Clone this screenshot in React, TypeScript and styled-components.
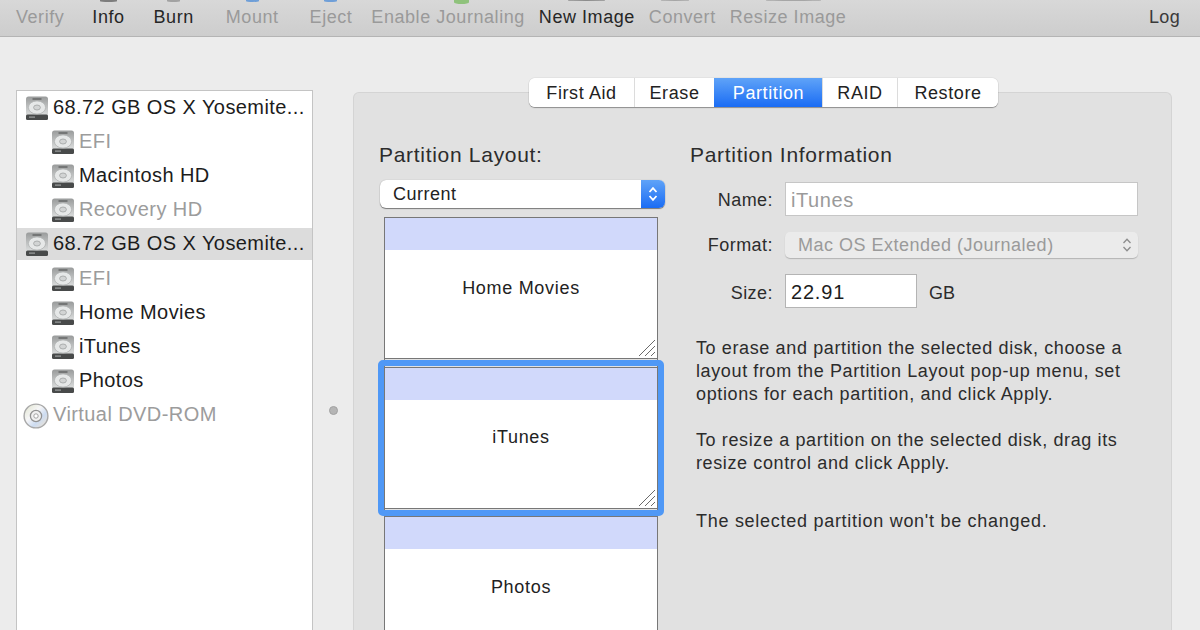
import React, { FC } from "react";
import styled, { createGlobalStyle } from "styled-components";

const GlobalStyle = createGlobalStyle`
  html, body {
    margin: 0;
    padding: 0;
    background: #ececec;
  }
  body {
    font-family: "Liberation Sans", Arial, sans-serif;
    -webkit-font-smoothing: antialiased;
  }
`;

type ToolItem = {
  label: string;
  gap: number;
  off?: boolean;
  stub?: { w: number; h: number; color: string; shift?: number };
};

const toolItems: ToolItem[] = [
  { label: "Verify", gap: 16, off: true },
  { label: "Info", gap: 28, stub: { w: 17, h: 1.5, color: "#7d7d7d" } },
  { label: "Burn", gap: 29, stub: { w: 13, h: 1.5, color: "#a2a2a2" } },
  { label: "Mount", gap: 32, off: true, stub: { w: 13, h: 2, color: "#6f9fd8" } },
  { label: "Eject", gap: 31, off: true, stub: { w: 13, h: 2, color: "#6f9fd8" } },
  { label: "Enable Journaling", gap: 19, off: true, stub: { w: 15, h: 3.5, color: "#8fc27c", shift: 13 } },
  { label: "New Image", gap: 14, stub: { w: 37, h: 1, color: "#8c8c8c" } },
  { label: "Convert", gap: 14, off: true, stub: { w: 28, h: 1, color: "#a6a6a6", shift: -7 } },
  { label: "Resize Image", gap: 14, off: true, stub: { w: 55, h: 1, color: "#a6a6a6", shift: 5 } },
];

const tabs = [
  { label: "First Aid", width: 105 },
  { label: "Erase", width: 80 },
  { label: "Partition", width: 108, active: true },
  { label: "RAID", width: 75 },
  { label: "Restore", width: 101 },
];

const disks = [
  { label: "68.72 GB OS X Yosemite...", kind: "disk" },
  { label: "EFI", kind: "volume", off: true },
  { label: "Macintosh HD", kind: "volume" },
  { label: "Recovery HD", kind: "volume", off: true },
  { label: "68.72 GB OS X Yosemite...", kind: "disk", selected: true },
  { label: "EFI", kind: "volume", off: true },
  { label: "Home Movies", kind: "volume" },
  { label: "iTunes", kind: "volume" },
  { label: "Photos", kind: "volume" },
  { label: "Virtual DVD-ROM", kind: "dvd", off: true },
];

const DriveIcon: FC<{ id: string }> = ({ id }) => (
  <IconSvg width="24" height="25" viewBox="0 0 24 25">
    <defs>
      <linearGradient id={id} x1="0" y1="0" x2="0" y2="1">
        <stop offset="0" stopColor="#999b9b" />
        <stop offset="0.75" stopColor="#d8dada" />
      </linearGradient>
    </defs>
    <rect x="1" y="0.5" width="22" height="23.5" rx="2.5" fill={`url(#${id})`} />
    <rect x="1" y="18.5" width="22" height="5.5" rx="1.5" fill="#484a4a" />
    <rect x="4" y="20.5" width="6" height="1.2" fill="#9c9e9e" />
    <ellipse cx="12" cy="11.5" rx="8.6" ry="6.6" fill="#e6e8e8" stroke="#b0b2b2" strokeWidth="0.8" />
    <ellipse cx="12" cy="11.5" rx="3.4" ry="2.5" fill="#d2d4d4" stroke="#a0a2a2" strokeWidth="0.8" />
    <rect x="7.5" y="2.2" width="9" height="1.6" fill="#6a6c6c" />
  </IconSvg>
);

const DvdIcon: FC = () => (
  <IconSvg width="26" height="26" viewBox="0 0 26 26">
    <defs>
      <linearGradient id="dvdShine" x1="0" y1="0" x2="1" y2="1">
        <stop offset="0" stopColor="#dfe3cc" />
        <stop offset="0.4" stopColor="#f6f6f7" />
        <stop offset="0.65" stopColor="#cddcf1" />
        <stop offset="1" stopColor="#f3e4cd" />
      </linearGradient>
    </defs>
    <circle cx="13" cy="13" r="11.9" fill="url(#dvdShine)" stroke="#a8a8a8" strokeWidth="1.4" />
    <circle cx="13" cy="13" r="5.6" fill="#f0f0f0" stroke="#929292" strokeWidth="1.3" />
    <circle cx="13" cy="13" r="2.2" fill="#ffffff" stroke="#9a9a9a" strokeWidth="0.9" />
  </IconSvg>
);

const Updown: FC<{ color: string; weight: number }> = ({ color, weight }) => (
  <svg width="12" height="18" viewBox="0 0 12 18" fill="none" stroke={color} strokeWidth={weight}>
    <path d="M2.5 7 L6 3.2 L9.5 7" />
    <path d="M2.5 11 L6 14.8 L9.5 11" />
  </svg>
);

const ResizeGrip: FC = () => (
  <GripSvg width="18" height="18" viewBox="0 0 18 18" stroke="#6a6a6a" strokeWidth="1">
    <path d="M1 17 L17 1" />
    <path d="M7 17 L17 7" />
    <path d="M13 17 L17 13" />
  </GripSvg>
);

const Partition: FC<{ name: string; selected?: boolean }> = ({ name, selected }) => (
  <PartitionBox>
    <PartitionHeader />
    <PartitionBody>
      <PartitionName>{name}</PartitionName>
      <ResizeGrip />
    </PartitionBody>
    {selected && <SelectionRing />}
  </PartitionBox>
);

export default function App() {
  return (
    <Page>
      <GlobalStyle />
      <Toolbar>
        {toolItems.map((t) => (
          <ToolLabel key={t.label} $gap={t.gap} $off={t.off}>
            {t.stub && (
              <ToolStub $w={t.stub.w} $h={t.stub.h} $color={t.stub.color} $shift={t.stub.shift || 0} />
            )}
            {t.label}
          </ToolLabel>
        ))}
        <LogLabel>Log</LogLabel>
      </Toolbar>
      <Content>
        <Sidebar>
          {disks.map((d, i) => (
            <DiskRow key={i} $selected={d.selected} $kind={d.kind}>
              {d.kind === "dvd" ? <DvdIcon /> : <DriveIcon id={`drive${i}`} />}
              <DiskName $off={d.off}>{d.label}</DiskName>
            </DiskRow>
          ))}
        </Sidebar>
        <Splitter>
          <SplitterDot />
        </Splitter>
        <Panel>
          <TabBar>
            {tabs.map((t) => (
              <Tab key={t.label} $active={t.active} $width={t.width}>
                {t.label}
              </Tab>
            ))}
          </TabBar>
          <Columns>
            <LayoutColumn>
              <SectionTitle>Partition Layout:</SectionTitle>
              <LayoutSelect>
                <span>Current</span>
                <SelectArrows>
                  <Updown color="#fff" weight={1.8} />
                </SelectArrows>
              </LayoutSelect>
              <PartitionMap>
                <Partition name="Home Movies" />
                <Partition name="iTunes" selected />
                <Partition name="Photos" />
              </PartitionMap>
            </LayoutColumn>
            <InfoColumn>
              <SectionTitle>Partition Information</SectionTitle>
              <FormRow $top={14}>
                <FieldLabel $drop={2}>Name:</FieldLabel>
                <NameField>iTunes</NameField>
              </FormRow>
              <FormRow $top={16}>
                <FieldLabel $drop={0}>Format:</FieldLabel>
                <FormatField>
                  <span>Mac OS Extended (Journaled)</span>
                  <Updown color="#8d8d8d" weight={1.3} />
                </FormatField>
              </FormRow>
              <FormRow $top={16}>
                <FieldLabel $drop={4}>Size:</FieldLabel>
                <SizeField>22.91</SizeField>
                <Unit>GB</Unit>
              </FormRow>
              <HelpText>
                <p>
                  To erase and partition the selected disk, choose a
                  <br />
                  layout from the Partition Layout pop-up menu, set
                  <br />
                  options for each partition, and click Apply.
                </p>
                <p>
                  To resize a partition on the selected disk, drag its
                  <br />
                  resize control and click Apply.
                </p>
                <LastNote>The selected partition won't be changed.</LastNote>
              </HelpText>
            </InfoColumn>
          </Columns>
        </Panel>
      </Content>
    </Page>
  );
}

const Page = styled.div`
  width: 1200px;
  height: 630px;
  overflow: hidden;
  display: flex;
  flex-direction: column;
  background: #ececec;
`;

const Toolbar = styled.div`
  height: 36px;
  flex: none;
  display: flex;
  background: linear-gradient(#d8d8d8, #cdcdcd);
  border-bottom: 1px solid #b4b4b4;
`;

const ToolLabel = styled.div<{ $gap: number; $off?: boolean }>`
  position: relative;
  display: flex;
  align-items: center;
  padding-bottom: 2px;
  margin-left: ${(p) => p.$gap}px;
  font-size: 18px;
  letter-spacing: 0.55px;
  color: ${(p) => (p.$off ? "#9a9a9a" : "#262626")};
  white-space: nowrap;
`;

const ToolStub = styled.div<{ $w: number; $h: number; $color: string; $shift: number }>`
  position: absolute;
  top: 0;
  left: 50%;
  width: ${(p) => p.$w}px;
  height: ${(p) => p.$h}px;
  margin-left: ${(p) => p.$shift - p.$w / 2}px;
  background: ${(p) => p.$color};
  border-radius: 0 0 50% 50%;
`;

const LogLabel = styled.div`
  display: flex;
  align-items: center;
  padding-bottom: 2px;
  margin-left: auto;
  margin-right: 20px;
  font-size: 18px;
  letter-spacing: 0.3px;
  color: #3a3a3a;
`;

const Content = styled.div`
  flex: 1;
  display: flex;
  padding: 53px 28px 0 16px;
  min-height: 0;
`;

const Sidebar = styled.div`
  width: 295px;
  flex: none;
  background: #fff;
  border: 1px solid #c4c4c4;
  border-bottom: none;
`;

const DiskRow = styled.div<{ $selected?: boolean; $kind: string }>`
  height: 34.2px;
  box-sizing: border-box;
  padding-bottom: 2px;
  display: flex;
  align-items: center;
  gap: 4px;
  padding-left: ${(p) => (p.$kind === "volume" ? "34px" : p.$kind === "dvd" ? "6px" : "8px")};
  background: ${(p) =>
    p.$selected ? "linear-gradient(#dcdcdc, #dcdcdc) 0 0 / 100% 32px no-repeat" : "none"};
`;

const IconSvg = styled.svg`
  flex: none;
  margin-top: 2px;
  filter: blur(0.35px);
`;

const DiskName = styled.span<{ $off?: boolean }>`
  font-size: 20px;
  letter-spacing: 0.42px;
  color: ${(p) => (p.$off ? "#9c9c9c" : "#1c1c1c")};
  white-space: nowrap;
`;

const Splitter = styled.div`
  width: 40px;
  flex: none;
  display: flex;
  justify-content: center;
  padding-top: 316px;
  box-sizing: border-box;
`;

const SplitterDot = styled.div`
  width: 9px;
  height: 9px;
  border-radius: 50%;
  background: #b5b5b5;
  border: 1px solid #a2a2a2;
  box-sizing: border-box;
`;

const Panel = styled.div`
  flex: 1;
  margin-top: 2px;
  background: #e1e1e1;
  border: 1px solid #d4d4d4;
  border-bottom: none;
  border-radius: 6px 6px 0 0;
  padding-left: 25px;
  position: relative;
  box-sizing: border-box;
`;

const TabBar = styled.div`
  position: absolute;
  top: -15px;
  left: 175px;
  display: flex;
  height: 29px;
  background: #fff;
  border-radius: 6px;
  box-shadow: 0 1px 1px rgba(0, 0, 0, 0.35), 0 0 1px rgba(0, 0, 0, 0.35);
  overflow: hidden;
`;

const Tab = styled.div<{ $active?: boolean; $width: number }>`
  width: ${(p) => p.$width}px;
  box-sizing: border-box;
  display: flex;
  align-items: center;
  justify-content: center;
  padding-top: 2px;
  font-size: 18px;
  letter-spacing: 0.6px;
  color: ${(p) => (p.$active ? "#fff" : "#222")};
  background: ${(p) => (p.$active ? "linear-gradient(#5fa3f8, #1a6cf4)" : "#fff")};
  border-left: 1px solid ${(p) => (p.$active ? "transparent" : "#dcdcdc")};

  &:first-child {
    border-left: none;
  }
`;

const Columns = styled.div`
  display: flex;
  padding-top: 49px;
`;

const LayoutColumn = styled.div`
  width: 311px;
  flex: none;
  display: flex;
  flex-direction: column;
`;

const SectionTitle = styled.div`
  font-size: 21px;
  letter-spacing: 0.7px;
  line-height: 26px;
  color: #2c2c2c;
`;

const LayoutSelect = styled.div`
  margin-top: 12px;
  margin-left: 1px;
  width: 285px;
  height: 28px;
  box-sizing: border-box;
  display: flex;
  align-items: center;
  justify-content: space-between;
  background: #fff;
  border-radius: 6px;
  padding-left: 13px;
  font-size: 18px;
  letter-spacing: 0.5px;
  color: #222;
  box-shadow: 0 1px 1px rgba(0, 0, 0, 0.45), 0 0 1px rgba(0, 0, 0, 0.3);
  overflow: hidden;
`;

const SelectArrows = styled.div`
  width: 24px;
  height: 100%;
  display: flex;
  align-items: center;
  justify-content: center;
  background: linear-gradient(#5fa3f8, #1a6cf4);
`;

const PartitionMap = styled.div`
  margin-top: 9px;
  margin-left: 5px;
  width: 274px;
  display: flex;
  flex-direction: column;
  gap: 7.5px;
  background: linear-gradient(#777, #777) left / 1px 100% no-repeat,
    linear-gradient(#777, #777) right / 1px 100% no-repeat;
`;

const PartitionBox = styled.div`
  position: relative;
  flex: none;
  height: 142px;
  box-sizing: border-box;
  background: #fff;
  border: 1px solid #777;
  display: flex;
  flex-direction: column;
`;

const PartitionHeader = styled.div`
  height: 32px;
  flex: none;
  background: #d1d9fb;
`;

const PartitionBody = styled.div`
  flex: 1;
  position: relative;
  display: flex;
  align-items: center;
  justify-content: center;
`;

const PartitionName = styled.div`
  font-size: 18px;
  letter-spacing: 0.7px;
  color: #222;
  margin-top: -32px;
`;

const GripSvg = styled.svg`
  position: absolute;
  right: 1px;
  bottom: 1px;
  filter: blur(0.25px);
`;

const SelectionRing = styled.div`
  position: absolute;
  inset: -8px -7px -8px -7px;
  border: 6px solid #4f98f6;
  border-radius: 5px;
  pointer-events: none;
`;

const InfoColumn = styled.div`
  flex: 1;
  min-width: 0;
  display: flex;
  flex-direction: column;
  padding-right: 33px;
`;

const FormRow = styled.div<{ $top: number }>`
  display: flex;
  align-items: center;
  margin-top: ${(p) => p.$top}px;
`;

const FieldLabel = styled.div<{ $drop: number }>`
  width: 83px;
  flex: none;
  text-align: right;
  font-size: 18px;
  letter-spacing: 0.45px;
  color: #2c2c2c;
  margin-top: ${(p) => p.$drop}px;
  margin-right: 12px;
`;

const NameField = styled.div`
  flex: 1;
  height: 34px;
  box-sizing: border-box;
  display: flex;
  align-items: center;
  padding: 2px 0 0 5px;
  background: #fff;
  border: 1px solid #c6c6c6;
  font-size: 20px;
  letter-spacing: 0.6px;
  color: #9a9a9a;
`;

const FormatField = styled.div`
  flex: 1;
  height: 26px;
  box-sizing: border-box;
  display: flex;
  align-items: center;
  justify-content: space-between;
  padding: 0 5px 0 13px;
  background: #ebebeb;
  border-radius: 5px;
  box-shadow: 0 1px 1px rgba(0, 0, 0, 0.2);
  font-size: 18px;
  letter-spacing: 0.5px;
  color: #9a9a9a;
`;

const SizeField = styled.div`
  width: 132px;
  height: 34px;
  box-sizing: border-box;
  display: flex;
  align-items: center;
  padding: 3px 0 0 5px;
  background: #fff;
  border: 1px solid #b4b4b4;
  font-size: 20px;
  letter-spacing: 0.8px;
  color: #1c1c1c;
`;

const Unit = styled.div`
  margin: 4px 0 0 12px;
  font-size: 18px;
  color: #2c2c2c;
`;

const HelpText = styled.div`
  margin-top: 29px;
  margin-left: 6px;
  font-size: 18px;
  letter-spacing: 0.62px;
  line-height: 23px;
  color: #2c2c2c;

  p {
    margin: 0 0 23px;
  }
`;

const LastNote = styled.p`
  && {
    margin-top: 35px;
    letter-spacing: 0.72px;
  }
`;
